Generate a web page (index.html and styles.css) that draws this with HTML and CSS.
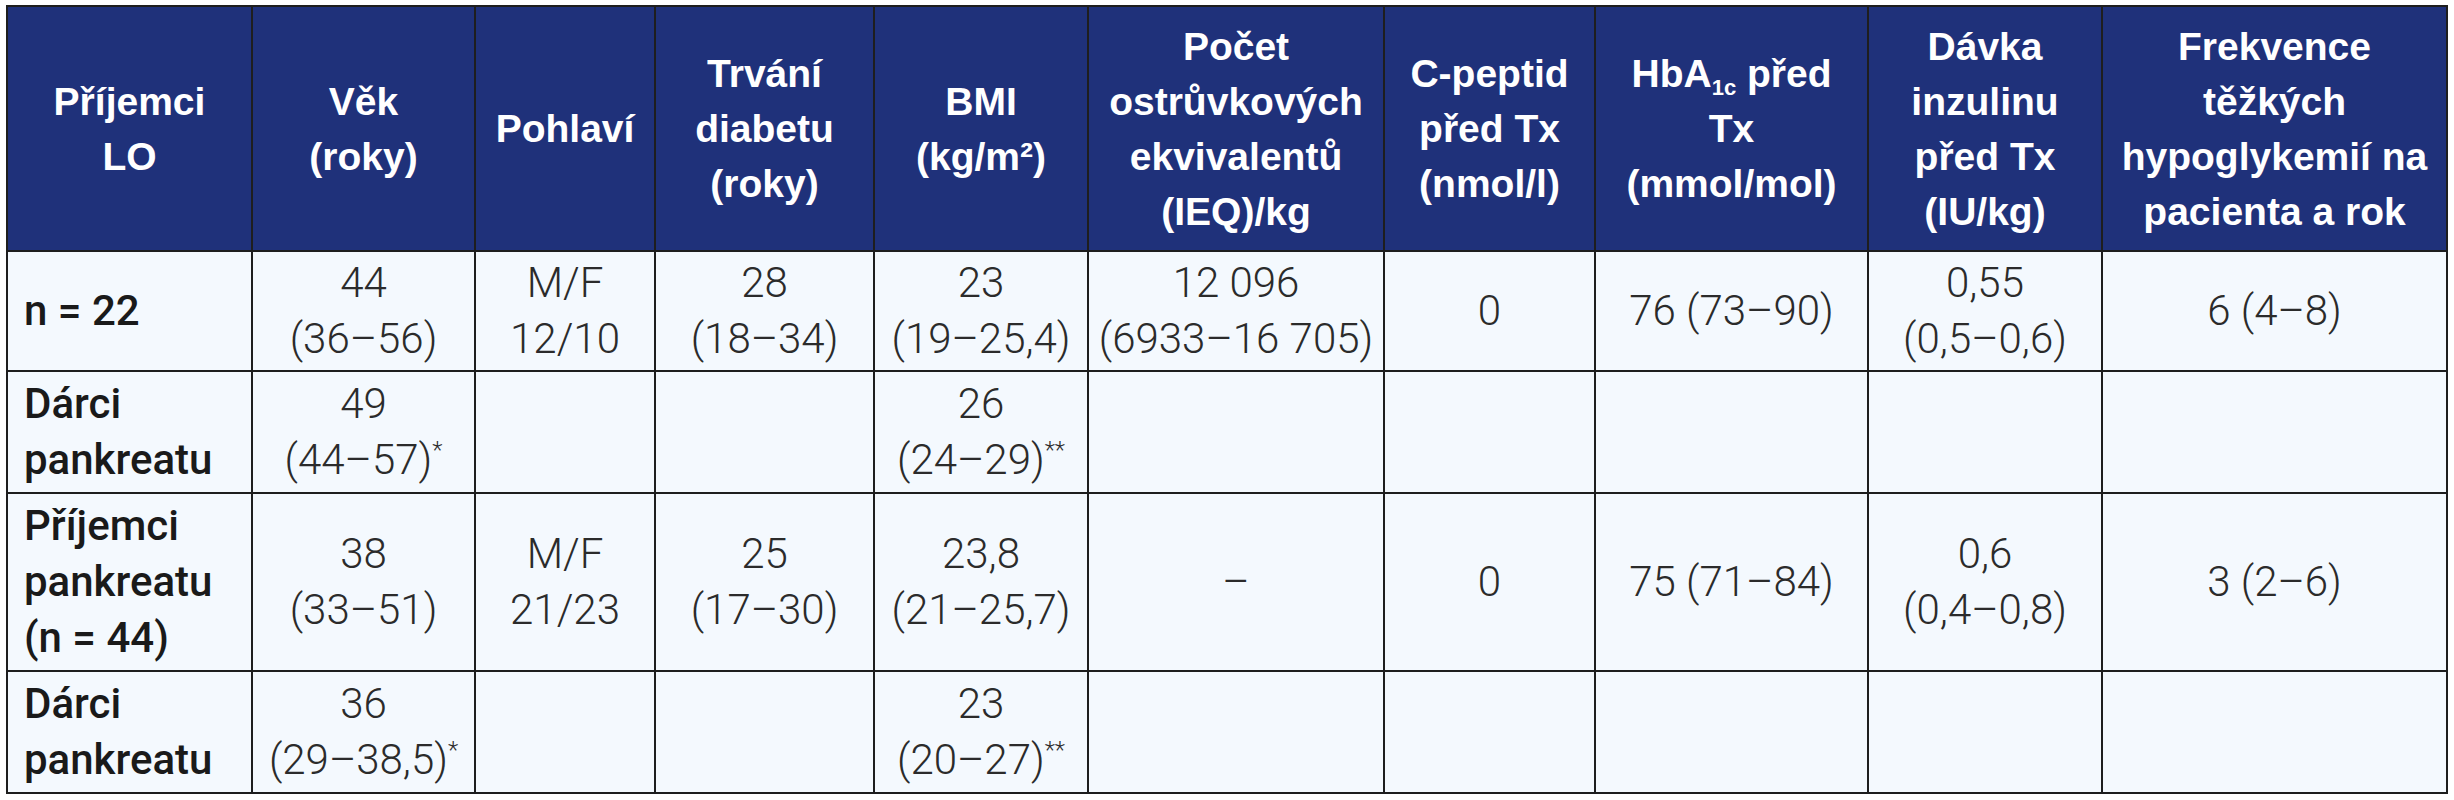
FILE: index.html
```html
<!DOCTYPE html>
<html lang="cs">
<head>
<meta charset="utf-8">
<title>Tabulka</title>
<link rel="stylesheet" href="styles.css">
</head>
<body>
<table class="data">
  <colgroup>
    <col class="w1"><col class="w2"><col class="w3"><col class="w4"><col class="w5">
    <col class="w6"><col class="w7"><col class="w8"><col class="w9"><col class="w10">
  </colgroup>
  <thead>
    <tr class="head">
      <th>Příjemci<br>LO</th>
      <th>Věk<br>(roky)</th>
      <th>Pohlaví</th>
      <th>Trvání<br>diabetu<br>(roky)</th>
      <th>BMI<br>(kg/m²)</th>
      <th>Počet<br>ostrůvkových<br>ekvivalentů<br>(IEQ)/kg</th>
      <th>C-peptid<br>před Tx<br>(nmol/l)</th>
      <th>HbA<sub class="sub">1c</sub> před<br>Tx<br>(mmol/mol)</th>
      <th>Dávka<br>inzulinu<br>před Tx<br>(IU/kg)</th>
      <th>Frekvence<br>těžkých<br>hypoglykemií na<br>pacienta a rok</th>
    </tr>
  </thead>
  <tbody>
    <tr class="r1">
      <td class="lab">n = 22</td>
      <td>44<br>(36–56)</td>
      <td>M/F<br>12/10</td>
      <td>28<br>(18–34)</td>
      <td>23<br>(19–25,4)</td>
      <td>12 096<br>(6933–16 705)</td>
      <td>0</td>
      <td>76 (73–90)</td>
      <td>0,55<br>(0,5–0,6)</td>
      <td>6 (4–8)</td>
    </tr>
    <tr class="r2">
      <td class="lab">Dárci<br>pankreatu</td>
      <td>49<br>(44–57)<sup class="ast">*</sup></td>
      <td></td>
      <td></td>
      <td>26<br>(24–29)<sup class="ast">**</sup></td>
      <td></td>
      <td></td>
      <td></td>
      <td></td>
      <td></td>
    </tr>
    <tr class="r3">
      <td class="lab">Příjemci<br>pankreatu<br>(n = 44)</td>
      <td>38<br>(33–51)</td>
      <td>M/F<br>21/23</td>
      <td>25<br>(17–30)</td>
      <td>23,8<br>(21–25,7)</td>
      <td>–</td>
      <td>0</td>
      <td>75 (71–84)</td>
      <td>0,6<br>(0,4–0,8)</td>
      <td>3 (2–6)</td>
    </tr>
    <tr class="r4">
      <td class="lab">Dárci<br>pankreatu</td>
      <td>36<br>(29–38,5)<sup class="ast">*</sup></td>
      <td></td>
      <td></td>
      <td>23<br>(20–27)<sup class="ast">**</sup></td>
      <td></td>
      <td></td>
      <td></td>
      <td></td>
      <td></td>
    </tr>
  </tbody>
</table>
</body>
</html>
```
FILE: styles.css
```css
html, body {
  margin: 0;
  padding: 0;
  background: #ffffff;
}

body {
  padding: 5px 0 0 6px;
}

.data {
  border-collapse: collapse;
  table-layout: fixed;
  width: 2442px;
  background: #f4f9fe;
}

.w1 { width: 245px; }
.w2 { width: 223px; }
.w3 { width: 180px; }
.w4 { width: 219px; }
.w5 { width: 214px; }
.w6 { width: 296px; }
.w7 { width: 211px; }
.w8 { width: 273px; }
.w9 { width: 234px; }
.w10 { width: 345px; }

.data th,
.data td {
  border: 2px solid #1e1e1e;
  padding: 0 4px;
  text-align: center;
  vertical-align: middle;
  white-space: nowrap;
}

.head { height: 245px; }
.r1 { height: 120px; }
.r2 { height: 122px; }
.r3 { height: 178px; }
.r4 { height: 122px; }

.data th {
  background: #1f317a;
  color: #ffffff;
  font-family: "Liberation Sans", Arial, sans-serif;
  font-weight: 700;
  font-size: 39px;
  line-height: 55px;
}

.data td {
  font-family: Roboto, "Liberation Sans", sans-serif;
  font-weight: 300;
  font-size: 42px;
  line-height: 56px;
  color: #2b2b2b;
}

.data td.lab {
  text-align: left;
  padding-left: 16px;
  font-weight: 500;
  color: #1a1a1a;
}

.sub {
  font-size: 22px;
  line-height: 0;
  vertical-align: -8px;
}

.ast {
  font-size: 24px;
  line-height: 0;
  vertical-align: 16px;
}
```
